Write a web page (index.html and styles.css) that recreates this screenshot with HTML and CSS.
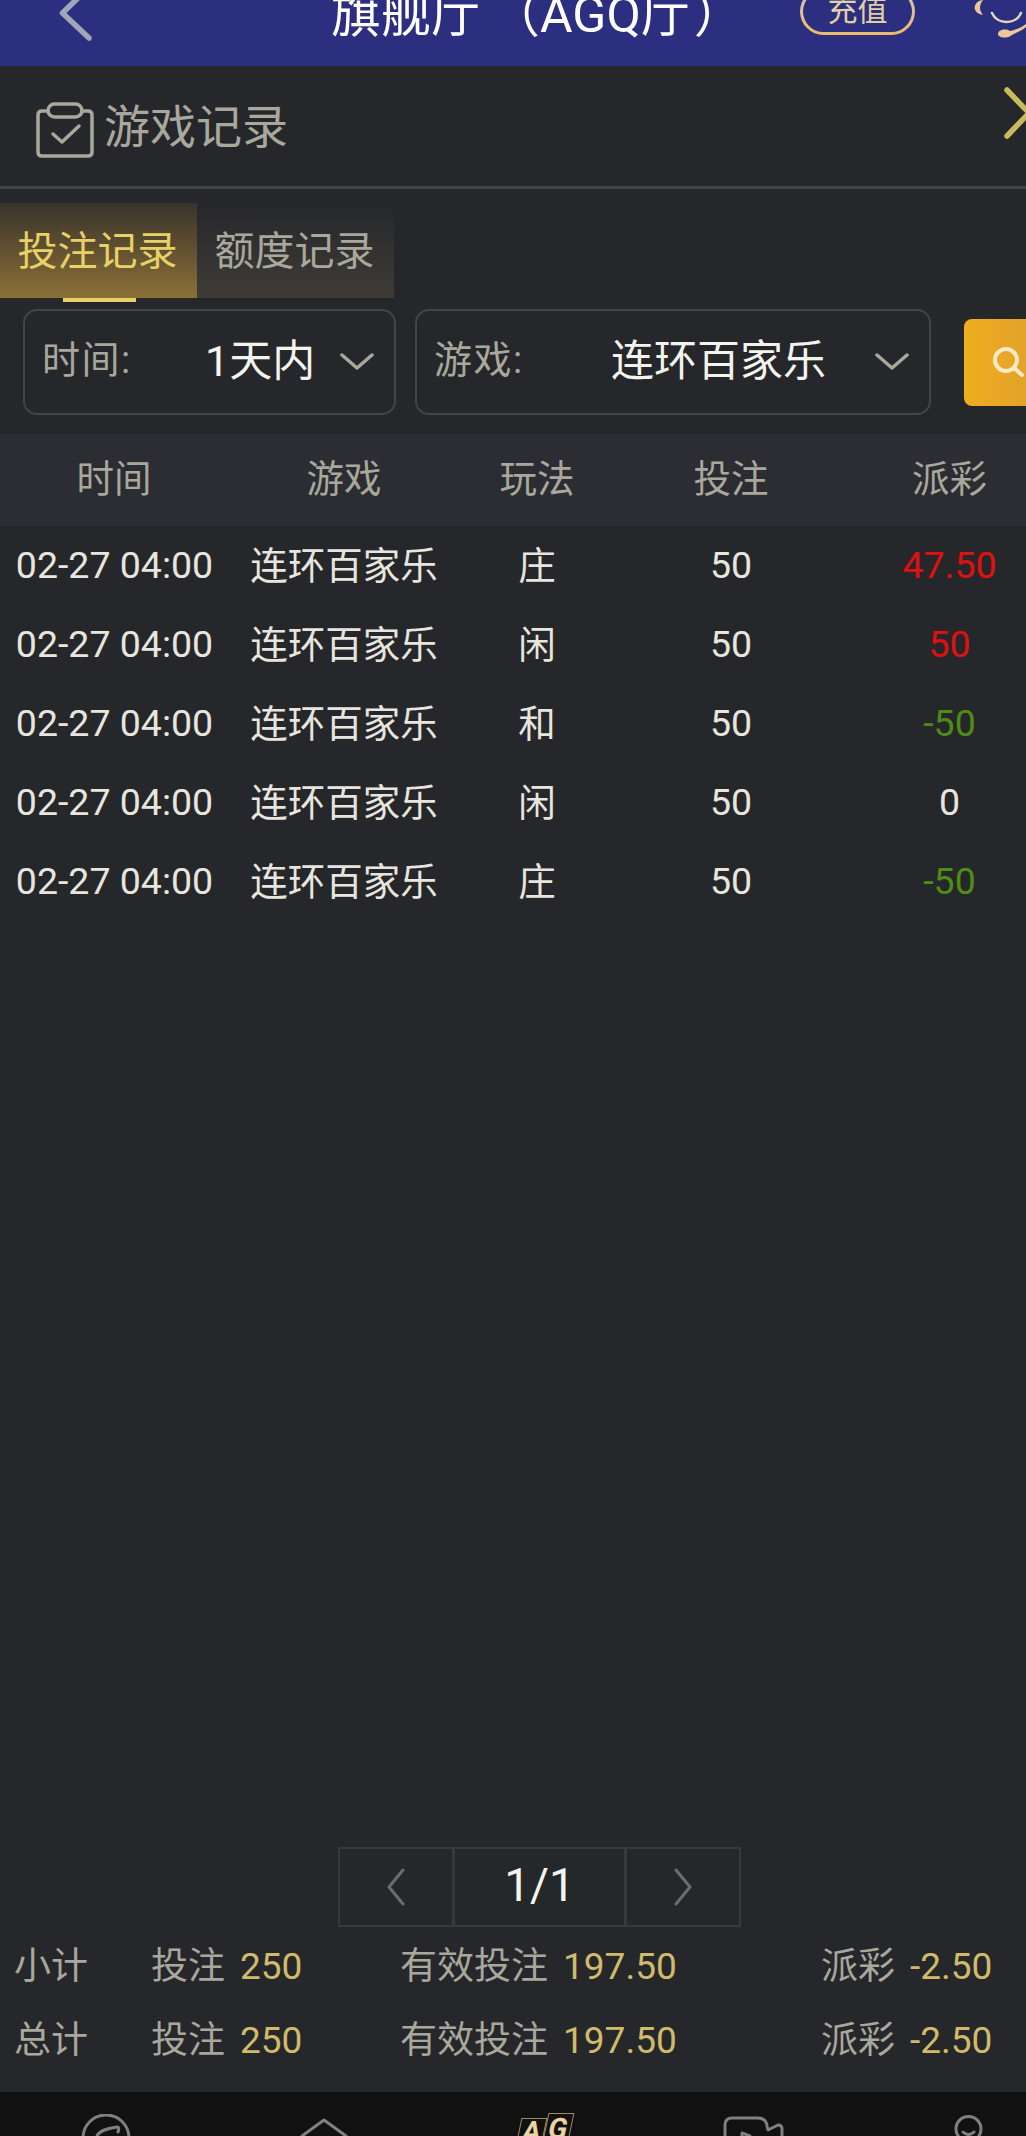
FILE: index.html
```html
<!DOCTYPE html>
<html lang="zh-CN">
<head>
  <meta charset="UTF-8" />
  <title>游戏记录</title>
  <link rel="stylesheet" href="styles.css">
</head>
<body>
  <header class="topbar">
    <svg class="back-icon" width="36" height="42" viewBox="0 0 36 42"><path d="M22 -4 L4.500 13 L31 38" /></svg>
    <div class="topbar-title">旗舰厅<span class="title-paren">（</span>AGQ<span class="title-hall">厅</span>）</div>
    <div class="topbar-charge">充值</div>
    <svg class="service-icon" width="60" height="40" viewBox="0 0 60 40">
      <path class="service-ear" d="M14 0 C4 1 2 13 14 15 C10 10 10 5 14 0 Z" />
      <path class="service-line" d="M23 13 C28 25 47 25 52 13" />
      <path class="service-ear" d="M29 34 C29 30 36 28 41 31 C47 30 53 27 57 24 L57 27 C52 31 47 33 43 35 C38 39 29 38 29 34 Z" />
    </svg>
  </header>

  <main class="panel">
    <div class="panel-head">
      <svg class="record-icon" width="60" height="60" viewBox="0 0 60 60">
        <path d="M13 10 H7 Q3 10 3 14 V51 Q3 55 7 55 H53 Q57 55 57 51 V14 Q57 10 53 10 H47" />
        <rect x="13" y="3" width="34" height="13" rx="6.500" />
        <path d="M18 33 L27 41 L44 25" />
      </svg>
      <div class="panel-title">游戏记录</div>
      <svg class="close-icon" width="30" height="52" viewBox="0 0 30 52"><path d="M5 3 L27 26 L5 49" /></svg>
    </div>

    <div class="tabs">
      <div class="tab tab-active">投注记录</div>
      <div class="tab">额度记录</div>
    </div>

    <div class="filters">
      <div class="filter filter-time">
        <span class="filter-label">时间:</span>
        <span class="filter-value">1天内</span>
        <svg class="chevron" width="34" height="18" viewBox="0 0 34 18"><path d="M2 2 L17 15 L32 2" /></svg>
      </div>
      <div class="filter filter-game">
        <span class="filter-label">游戏:</span>
        <span class="filter-value">连环百家乐</span>
        <svg class="chevron" width="34" height="18" viewBox="0 0 34 18"><path d="M2 2 L17 15 L32 2" /></svg>
      </div>
      <div class="search-btn">
        <svg width="36" height="36" viewBox="0 0 36 36"><circle cx="15" cy="16" r="11" /><path d="M23 24 L31 31" /></svg>
      </div>
    </div>

    <div class="row row-head">
      <div class="col-time">时间</div>
      <div class="col-game">游戏</div>
      <div class="col-play">玩法</div>
      <div class="col-bet">投注</div>
      <div class="col-pay">派彩</div>
    </div>
    <div class="rows">
      <div class="row">
        <div class="col-time">02-27 04:00</div><div class="col-game">连环百家乐</div><div class="col-play">庄</div><div class="col-bet">50</div><div class="col-pay win">47.50</div>
      </div>
      <div class="row">
        <div class="col-time">02-27 04:00</div><div class="col-game">连环百家乐</div><div class="col-play">闲</div><div class="col-bet">50</div><div class="col-pay win">50</div>
      </div>
      <div class="row">
        <div class="col-time">02-27 04:00</div><div class="col-game">连环百家乐</div><div class="col-play">和</div><div class="col-bet">50</div><div class="col-pay lose">-50</div>
      </div>
      <div class="row">
        <div class="col-time">02-27 04:00</div><div class="col-game">连环百家乐</div><div class="col-play">闲</div><div class="col-bet">50</div><div class="col-pay">0</div>
      </div>
      <div class="row">
        <div class="col-time">02-27 04:00</div><div class="col-game">连环百家乐</div><div class="col-play">庄</div><div class="col-bet">50</div><div class="col-pay lose">-50</div>
      </div>
    </div>

    <div class="pager">
      <div class="pager-btn"><svg width="20" height="38" viewBox="0 0 20 38"><path d="M17 2 L3 19 L17 36" /></svg></div>
      <div class="pager-num">1/1</div>
      <div class="pager-btn"><svg width="20" height="38" viewBox="0 0 20 38"><path d="M3 2 L17 19 L3 36" /></svg></div>
    </div>

    <div class="totals">
      <div class="total-row">
        <span class="total-name">小计</span>
        <span class="total-bet">投注<b>250</b></span>
        <span class="total-valid">有效投注<b>197.50</b></span>
        <span class="total-pay">派彩<b>-2.50</b></span>
      </div>
      <div class="total-row">
        <span class="total-name">总计</span>
        <span class="total-bet">投注<b>250</b></span>
        <span class="total-valid">有效投注<b>197.50</b></span>
        <span class="total-pay">派彩<b>-2.50</b></span>
      </div>
    </div>
  </main>

  <!-- icons are cut off by the bottom of the screen -->
  <nav class="bottom-nav">
    <svg class="nav-icon nav-find" width="50" height="22" viewBox="0 0 50 22"><circle cx="25" cy="24" r="23" /><path d="M16 22 C18 17 28 14 36 13 C38 13 38 15 37 18" /></svg>
    <svg class="nav-icon nav-home" width="60" height="22" viewBox="0 0 60 22"><path d="M8 22 L30 6 L52 22" /></svg>
    <div class="nav-ag"><span class="ag-a">A</span><span class="ag-g">G</span></div>
    <svg class="nav-icon nav-video" width="62" height="21" viewBox="0 0 62 21"><path d="M3 21 V10 Q3 3 10 3 H36 Q44 3 45 11 L46 15 L56 10 Q60 10 60 14 V21" /><path d="M20 21 V18 L28 21" /></svg>
    <svg class="nav-icon nav-user" width="29" height="21" viewBox="0 0 29 21"><circle cx="14.500" cy="14" r="12.500" /><path d="M9 17 Q14.500 22 20 17" /></svg>
  </nav>
</body>
</html>
```

FILE: styles.css
```css
html, body {
  margin: 0;
  padding: 0;
}
body {
  width: 1026px;
  height: 2136px;
  overflow: hidden;
  background: #26272b;
  font-family: Roboto, "Noto Sans CJK SC", sans-serif;
  color: #e6e6df;
  display: flex;
  flex-direction: column;
}
svg {
  fill: none;
  stroke-linecap: round;
  stroke-linejoin: round;
  flex: none;
}

/* top bar, cut off by the top of the screen */
.topbar {
  height: 66px;
  flex: none;
  background: #2c2f80;
  display: flex;
  align-items: flex-start;
  padding-left: 58px;
  overflow: hidden;
}
.back-icon {
  stroke: #a0a5b8;
  stroke-width: 5.5;
}
.topbar-title {
  margin: -13px 0 0 237px;
  width: 469px;
  flex: none;
  font-size: 50px;
  line-height: 56px;
  color: #fff;
  white-space: nowrap;
}
.title-paren {
  margin-left: 9px;
}
.title-hall {
  letter-spacing: 3px;
}
.topbar-charge {
  margin-top: -12px;
  width: 115px;
  height: 47px;
  flex: none;
  box-sizing: border-box;
  border: 3px solid transparent;
  border-radius: 24px;
  background: linear-gradient(#2c2f80, #2c2f80) padding-box, linear-gradient(#cfc7c0, #f0b868) border-box;
  color: #e3cfa4;
  font-size: 30px;
  line-height: 40px;
  text-align: center;
}
.service-icon {
  margin-left: 54px;
}
.service-ear {
  fill: #ecc79a;
}
.service-line {
  stroke: #e3d5c0;
  stroke-width: 2.500;
}

.panel {
  flex: 1;
  display: flex;
  flex-direction: column;
  min-height: 0;
}
.panel-head {
  height: 123px;
  flex: none;
  box-sizing: border-box;
  border-bottom: 3px solid #414244;
  display: flex;
  align-items: center;
  padding-left: 35px;
}
.record-icon {
  stroke: #a8a89c;
  stroke-width: 3.500;
  margin-top: 10px;
}
.panel-title {
  font-size: 46px;
  color: #a8a89c;
  margin: 0 0 6px 9px;
}
.close-icon {
  align-self: flex-start;
  margin: 21px -6px 0 auto;
  stroke: #c7bb5c;
  stroke-width: 5.500;
}

.tabs {
  display: flex;
  margin-top: 14px;
  height: 95px;
  flex: none;
}
.tab {
  width: 197px;
  box-sizing: border-box;
  padding-right: 2px;
  font-size: 40px;
  line-height: 97px;
  text-align: center;
  color: #a8a89c;
  background: linear-gradient(#26272b, #3f3c37);
}
.tab-active {
  color: #e8d166;
  background: linear-gradient(#38332b, #8c7037);
  position: relative;
}
.tab-active::after {
  content: "";
  position: absolute;
  left: 63px;
  top: 95px;
  width: 73px;
  height: 4px;
  background: #e8d166;
}

.filters {
  display: flex;
  align-items: center;
  margin-top: 11px;
  padding-left: 23px;
  height: 106px;
  flex: none;
}
.filter {
  height: 106px;
  box-sizing: border-box;
  border: 2px solid #434446;
  border-radius: 14px;
  display: flex;
  align-items: center;
  flex: none;
}
.filter-time {
  width: 373px;
}
.filter-game {
  width: 516px;
  margin-left: 19px;
}
.filter-label {
  flex: none;
  font-size: 38px;
  letter-spacing: 1.500px;
  color: #a8a89c;
  margin: 0 0 11px 17px;
}
.filter-time .filter-label {
  width: 163px;
}
.filter-game .filter-label {
  width: 177px;
}
.filter-value {
  font-size: 43px;
  color: #f4f4ee;
  white-space: nowrap;
  margin-bottom: 11px;
}
.chevron {
  margin: 0 20px 0 auto;
  stroke: #a8a89c;
  stroke-width: 3.500;
}
.search-btn {
  width: 100px;
  height: 87px;
  margin-left: 33px;
  flex: none;
  border-radius: 8px;
  background: linear-gradient(90deg, #eeae1e, #dc9c32);
  display: flex;
  align-items: center;
  padding-left: 27px;
  box-sizing: border-box;
}
.search-btn svg {
  stroke: #fbeac4;
  stroke-width: 4;
}

.row {
  display: flex;
  align-items: center;
  height: 79px;
  font-size: 37.500px;
  flex: none;
}
.row > div {
  box-sizing: border-box;
  text-align: center;
  white-space: nowrap;
  flex: none;
}
.row-head {
  margin-top: 19px;
  height: 92px;
  background: #2c2d32;
  color: #a8a89c;
}
.row-head > div {
  padding-bottom: 9px;
}
.rows .row > div {
  padding-bottom: 2px;
}
.rows .row > .col-game, .rows .row > .col-play {
  padding-bottom: 7px;
}
.col-time {
  width: 228px;
}
.rows .col-time {
  padding-left: 1px;
}
.col-game {
  width: 232px;
}
.col-play {
  width: 154px;
}
.col-bet {
  width: 234px;
}
.col-pay {
  width: 203px;
}
.win {
  color: #e01010;
}
.lose {
  color: #4f8c14;
}

.pager {
  display: flex;
  margin-top: auto;
  margin-left: 338px;
  width: 403px;
  height: 80px;
  flex: none;
  border: 2px solid #38393b;
  box-sizing: border-box;
  background: #25282a;
}
.pager-btn {
  width: 112px;
  display: flex;
  align-items: center;
  justify-content: center;
  flex: none;
}
.pager-btn svg {
  stroke: #6b6c6e;
  stroke-width: 3;
}
.pager-num {
  flex: 1;
  text-align: center;
  font-size: 46px;
  line-height: 72px;
  border-left: 3px solid #38393b;
  border-right: 3px solid #38393b;
  color: #f4f4ee;
}

.totals {
  padding: 1px 0 16px;
  flex: none;
}
.total-row {
  height: 74px;
  box-sizing: border-box;
  padding-bottom: 4px;
  display: flex;
  align-items: center;
  font-size: 37px;
  color: #a8a89c;
  white-space: nowrap;
}
.total-row b {
  font-weight: normal;
  color: #cfbb6a;
  margin-left: 15px;
}
.total-name {
  margin-left: 14px;
  width: 137px;
  flex: none;
}
.total-bet {
  width: 249px;
  flex: none;
}
.total-valid {
  width: 421px;
  flex: none;
}

.bottom-nav {
  height: 44px;
  flex: none;
  background: #111112;
  display: flex;
  align-items: flex-start;
  padding-left: 81px;
  overflow: hidden;
}
.nav-icon {
  stroke: #808080;
  stroke-width: 3;
}
.nav-find {
  margin-top: 22px;
}
.nav-home {
  margin: 22px 0 0 163px;
}
.nav-ag {
  display: flex;
  margin: 21px 0 0 163px;
  width: 50px;
  flex: none;
  font-size: 28px;
  font-weight: bold;
  color: #ecd3a2;
  line-height: 30px;
  text-align: center;
}
.nav-ag span {
  width: 24px;
  height: 40px;
  flex: none;
  border: 1.500px solid #a08a60;
  transform: skewX(-12deg);
}
.ag-a {
  margin-top: 5px;
  line-height: 26px;
}
.ag-g {
  margin-left: 1px;
}
.nav-video {
  margin: 23px 0 0 155px;
}
.nav-user {
  margin: 23px 0 0 170px;
}
```
